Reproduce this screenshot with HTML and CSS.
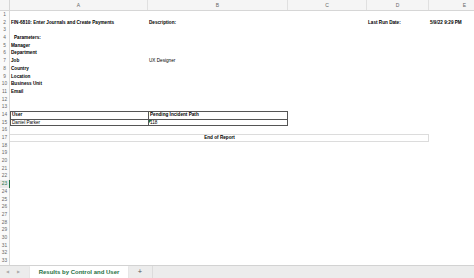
FILE: index.html
```html
<!DOCTYPE html>
<html>
<head>
<meta charset="utf-8">
<link rel="stylesheet" href="styles.css">
</head>
<body>
<div class="app">
  <div class="sheet">
    <div class="colhead">
      <div class="corner"></div>
      <div class="ch">A</div>
      <div class="ch">B</div>
      <div class="ch">C</div>
      <div class="ch">D</div>
      <div class="ch">E</div>
    </div>
    <div class="row"><div class="rh">1</div></div>
    <div class="row"><div class="rh">2</div><div class="ca b">FIN-6810: Enter Journals and Create Payments</div><div class="cb b">Description:</div><div class="cd b">Last Run Date:</div><div class="ce b">5/9/22 9:29 PM</div></div>
    <div class="row"><div class="rh">3</div></div>
    <div class="row"><div class="rh">4</div><div class="ca b indent">Parameters:</div></div>
    <div class="row"><div class="rh">5</div><div class="ca b">Manager</div></div>
    <div class="row"><div class="rh">6</div><div class="ca b">Department</div></div>
    <div class="row"><div class="rh">7</div><div class="ca b">Job</div><div class="cb">UX Designer</div></div>
    <div class="row"><div class="rh">8</div><div class="ca b">Country</div></div>
    <div class="row"><div class="rh">9</div><div class="ca b">Location</div></div>
    <div class="row"><div class="rh">10</div><div class="ca b">Business Unit</div></div>
    <div class="row"><div class="rh">11</div><div class="ca b">Email</div></div>
    <div class="row"><div class="rh">12</div></div>
    <div class="row"><div class="rh">13</div></div>
    <div class="row"><div class="rh">14</div><div class="ca b t tl">User</div><div class="cb b t tl tr">Pending Incident Path</div></div>
    <div class="row"><div class="rh">15</div><div class="ca t tl tbm">Daniel Parker</div><div class="cb t tl tr tbm flag">118</div></div>
    <div class="row"><div class="rh">16</div></div>
    <div class="row"><div class="rh">17</div><div class="cmerge b">End of Report</div></div>
    <div class="row"><div class="rh">18</div></div>
    <div class="row"><div class="rh">19</div></div>
    <div class="row"><div class="rh">20</div></div>
    <div class="row"><div class="rh">21</div></div>
    <div class="row"><div class="rh">22</div></div>
    <div class="row"><div class="rh sel">23</div></div>
    <div class="row"><div class="rh">24</div></div>
    <div class="row"><div class="rh">25</div></div>
    <div class="row"><div class="rh">26</div></div>
    <div class="row"><div class="rh">27</div></div>
    <div class="row"><div class="rh">28</div></div>
    <div class="row"><div class="rh">29</div></div>
    <div class="row"><div class="rh">30</div></div>
    <div class="row"><div class="rh">31</div></div>
    <div class="row"><div class="rh">32</div></div>
    <div class="row"><div class="rh">33</div></div>
  </div>
  <div class="tabs">
    <div class="nav"><span class="arr">&#9664;</span><span class="arr">&#9654;</span></div>
    <div class="tab">Results by Control and User</div>
    <div class="add">+</div>
    <div class="rest"></div>
  </div>
</div>
</body>
</html>
```
FILE: styles.css
```css
html, body {
  margin: 0;
  padding: 0;
  background: #ffffff;
}
body {
  width: 474px;
  height: 278px;
  overflow: hidden;
  font-family: "Liberation Sans", Arial, sans-serif;
  color: #000;
}
.app {
  display: flex;
  flex-direction: column;
  width: 474px;
  height: 278px;
}
.sheet {
  height: 265px;
  overflow: hidden;
}
.colhead, .row {
  display: grid;
  grid-template-columns: 10px 138px 140px 79px 62px 72px;
  width: 501px;
}
.colhead {
  height: 11px;
  background: #f5f5f5;
  border-bottom: 1px solid #d6d6d6;
  box-sizing: border-box;
}
.corner {
  border-right: 1px solid #d6d6d6;
}
.ch {
  font-size: 5px;
  line-height: 10px;
  text-align: center;
  color: #666;
  border-right: 1px solid #e0e0e0;
}
.row {
  height: 7.7px;
  font-size: 4.65px;
  line-height: 7.7px;
}
.rh {
  grid-column: 1;
  grid-row: 1;
  background: #fafafa;
  border-right: 1px solid #d9d9d9;
  color: #666;
  font-size: 4.8px;
  text-align: center;
  box-sizing: border-box;
}
.rh.sel {
  color: #217346;
  background: #e9e9e9;
  border-right: 1px solid #217346;
}
.ca, .cb, .cd, .ce, .cmerge {
  grid-row: 1;
  white-space: nowrap;
  padding-left: 1px;
  box-sizing: border-box;
}
.ca { grid-column: 2; }
.cb { grid-column: 3; }
.cd { grid-column: 5; }
.ce { grid-column: 6; }
.cmerge {
  grid-column: 2 / 6;
  text-align: center;
  border-top: 1px solid #dcdcdc;
  border-bottom: 1px solid #dcdcdc;
  border-right: 1px solid #dcdcdc;
  line-height: 6px;
}
.b { font-weight: bold; }
.indent { padding-left: 4px; }
.t { line-height: 6.7px; }
.tl { border-left: 1px solid #555; border-top: 1px solid #555; }
.tr { border-right: 1px solid #555; }
.tbm { border-bottom: 1px solid #555; line-height: 5.7px; }
.flag { position: relative; }
.flag::before {
  content: "";
  position: absolute;
  left: 0;
  top: 0;
  border-top: 3px solid #1e7145;
  border-right: 3px solid transparent;
}
.tabs {
  height: 13px;
  display: flex;
  background: #ececec;
  border-top: 1px solid #d2d2d2;
  box-sizing: border-box;
  font-size: 6px;
}
.nav {
  width: 30px;
  display: flex;
  gap: 8px;
  padding-left: 6px;
  align-items: center;
  box-sizing: border-box;
}
.arr {
  color: #aaa;
  font-size: 3.6px;
}
.tab {
  width: 98px;
  background: #ffffff;
  color: #1e7145;
  font-weight: bold;
  text-align: center;
  line-height: 12px;
  box-shadow: 0 1px 1px rgba(0,0,0,0.15);
}
.add {
  width: 24px;
  text-align: center;
  line-height: 12px;
  color: #555;
  font-size: 7.5px;
  border-right: 1px solid #dcdcdc;
}
.rest { flex: 1; }
```
